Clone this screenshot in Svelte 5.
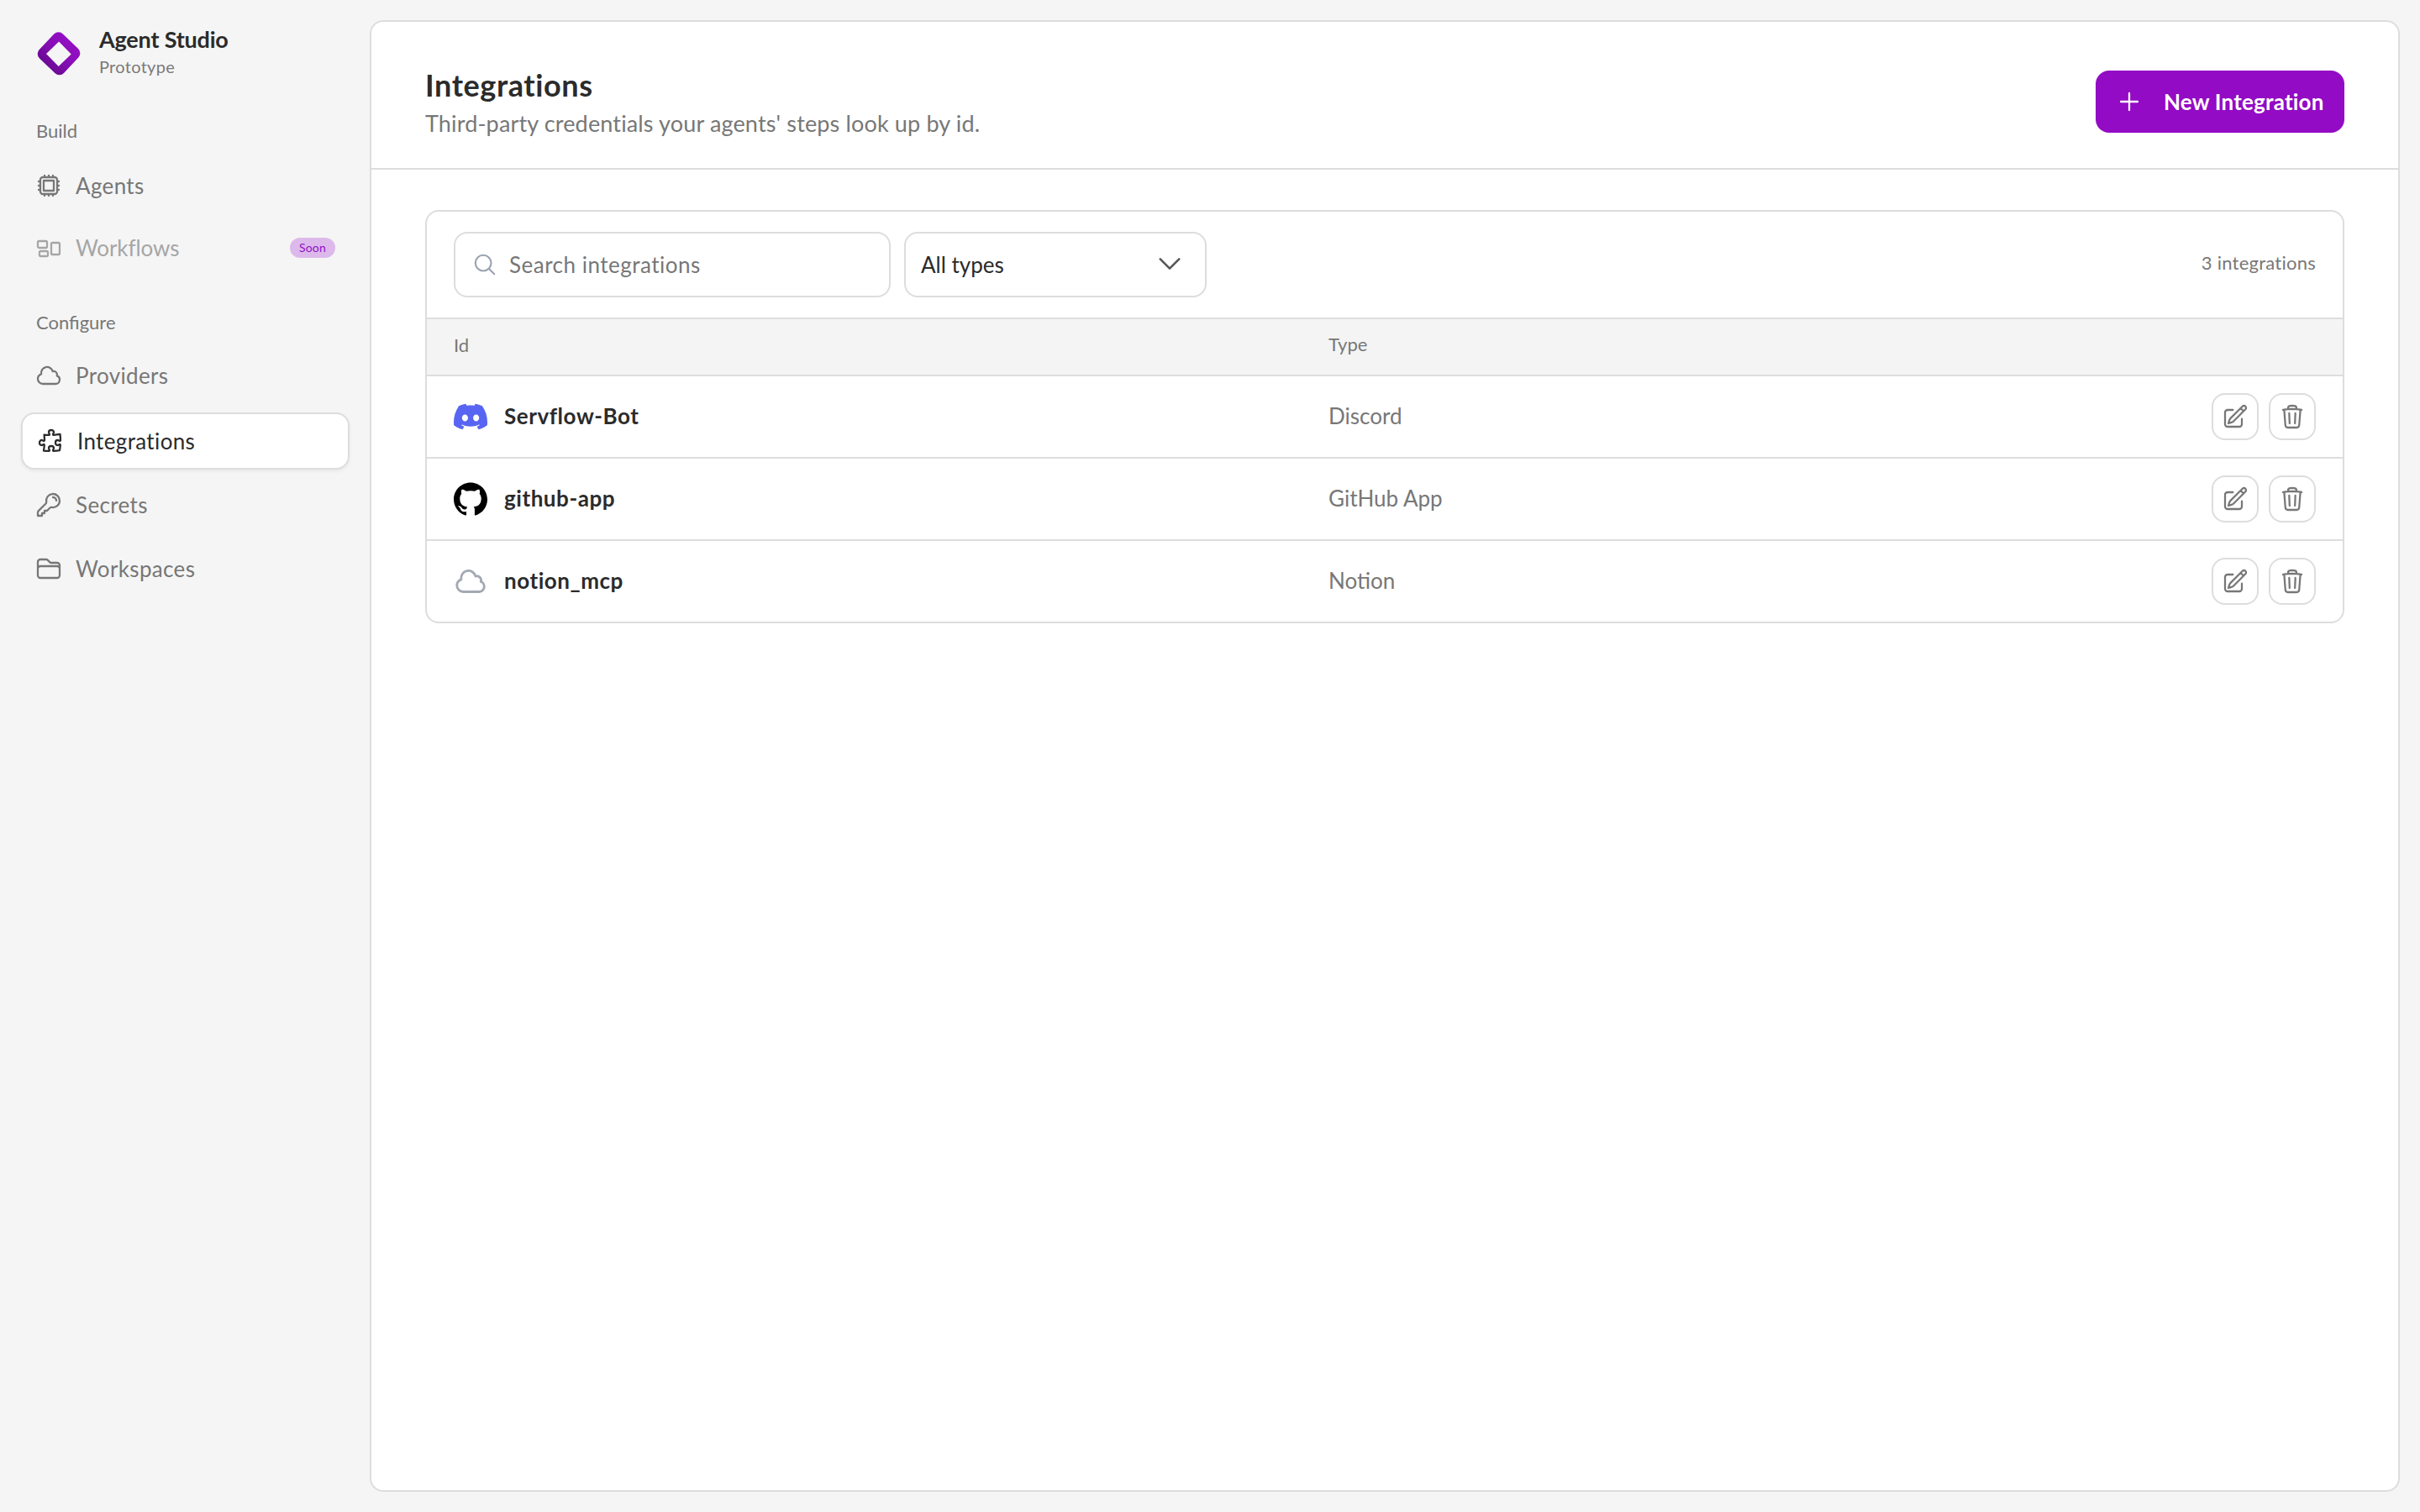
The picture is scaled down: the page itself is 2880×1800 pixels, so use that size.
<script>
	const rows = [
		{ id: "Servflow-Bot", type: "Discord", icon: "discord" },
		{ id: "github-app", type: "GitHub App", icon: "github" },
		{ id: "notion_mcp", type: "Notion", icon: "cloud" }
	];

	const paths = {
		cpu: "M8.25 3v1.5M4.5 8.25H3m18 0h-1.5M4.5 12H3m18 0h-1.5m-15 3.75H3m18 0h-1.5M8.25 19.5V21M12 3v1.5m0 15V21m3.75-18v1.5m0 15V21m-9-1.5h10.5a2.25 2.25 0 0 0 2.25-2.25V6.75a2.25 2.25 0 0 0-2.25-2.25H6.75A2.25 2.25 0 0 0 4.5 6.75v10.5a2.25 2.25 0 0 0 2.25 2.25Zm.75-12h9v9h-9v-9Z",
		group: "M2.25 7.125C2.25 6.504 2.754 6 3.375 6h6c.621 0 1.125.504 1.125 1.125v3.75c0 .621-.504 1.125-1.125 1.125h-6a1.125 1.125 0 0 1-1.125-1.125v-3.75ZM14.25 8.625c0-.621.504-1.125 1.125-1.125h5.25c.621 0 1.125.504 1.125 1.125v8.25c0 .621-.504 1.125-1.125 1.125h-5.25a1.125 1.125 0 0 1-1.125-1.125v-8.25ZM3.75 16.125c0-.621.504-1.125 1.125-1.125h5.25c.621 0 1.125.504 1.125 1.125v2.25c0 .621-.504 1.125-1.125 1.125h-5.25a1.125 1.125 0 0 1-1.125-1.125v-2.25Z",
		cloud: "M2.25 15a4.5 4.5 0 0 0 4.5 4.5H18a3.75 3.75 0 0 0 1.332-7.257 3 3 0 0 0-3.758-3.848 5.25 5.25 0 0 0-10.233 2.33A4.5 4.5 0 0 0 2.25 15Z",
		puzzle: "M14.25 6.087c0-.355.186-.676.401-.959.221-.29.349-.634.349-1.003 0-1.036-1.007-1.875-2.25-1.875s-2.25.84-2.25 1.875c0 .369.128.713.349 1.003.215.283.401.604.401.959v0a.64.64 0 0 1-.657.643 48.39 48.39 0 0 1-4.163-.3c.186 1.613.293 3.25.315 4.907a.656.656 0 0 1-.658.663v0c-.355 0-.676-.186-.959-.401a1.647 1.647 0 0 0-1.003-.349c-1.036 0-1.875 1.007-1.875 2.25s.84 2.25 1.875 2.25c.369 0 .713-.128 1.003-.349.283-.215.604-.401.959-.401v0c.31 0 .555.26.532.57a48.039 48.039 0 0 1-.642 5.056c1.518.19 3.058.309 4.616.354a.64.64 0 0 0 .657-.643v0c0-.355-.186-.676-.401-.959a1.647 1.647 0 0 1-.349-1.003c0-1.035 1.008-1.875 2.25-1.875 1.243 0 2.25.84 2.25 1.875 0 .369-.128.713-.349 1.003-.215.283-.4.604-.4.959v0c0 .333.277.599.61.58a48.1 48.1 0 0 0 5.427-.63 48.05 48.05 0 0 0 .582-4.717.532.532 0 0 0-.533-.57v0c-.355 0-.676.186-.959.401-.29.221-.634.349-1.003.349-1.035 0-1.875-1.007-1.875-2.25s.84-2.25 1.875-2.25c.37 0 .713.128 1.003.349.283.215.604.401.96.401v0a.656.656 0 0 0 .658-.663 48.422 48.422 0 0 0-.37-5.36c-1.886.342-3.81.574-5.766.689a.578.578 0 0 1-.61-.58v0Z",
		key: "M15.75 5.25a3 3 0 0 1 3 3m3 0a6 6 0 0 1-7.029 5.912c-.563-.097-1.159.026-1.563.43L10.5 17.25H8.25v2.25H6v2.25H2.25v-2.818c0-.597.237-1.17.659-1.591l6.499-6.499c.404-.404.527-1 .43-1.563A6 6 0 1 1 21.75 8.25Z",
		folder: "M2.25 12.75V12A2.25 2.25 0 0 1 4.5 9.75h15A2.25 2.25 0 0 1 21.75 12v.75m-8.69-6.44-2.12-2.12a1.5 1.5 0 0 0-1.061-.44H4.5A2.25 2.25 0 0 0 2.25 6v12a2.25 2.25 0 0 0 2.25 2.25h15A2.25 2.25 0 0 0 21.75 18V9a2.25 2.25 0 0 0-2.25-2.25h-5.379a1.5 1.5 0 0 1-1.06-.44Z",
		search: "m21 21-5.197-5.197m0 0A7.5 7.5 0 1 0 5.196 5.196a7.5 7.5 0 0 0 10.607 10.607Z",
		chevron: "m19.5 8.25-7.5 7.5-7.5-7.5",
		plus: "M12 4.5v15m7.5-7.5h-15",
		edit: "m16.862 4.487 1.687-1.688a1.875 1.875 0 1 1 2.652 2.652L10.582 16.07a4.5 4.5 0 0 1-1.897 1.13L6 18l.8-2.685a4.5 4.5 0 0 1 1.13-1.897l8.932-8.931Zm0 0L19.5 7.125M18 14v4.75A2.25 2.25 0 0 1 15.75 21H5.25A2.25 2.25 0 0 1 3 18.75V8.25A2.25 2.25 0 0 1 5.25 6H10",
		trash: "m14.74 9-.346 9m-4.788 0L9.26 9m9.968-3.21c.342.052.682.107 1.022.166m-1.022-.165L18.16 19.673a2.25 2.25 0 0 1-2.244 2.077H8.084a2.25 2.25 0 0 1-2.244-2.077L4.772 5.79m14.456 0a48.108 48.108 0 0 0-3.478-.397m-12 .562c.34-.059.68-.114 1.022-.165m0 0a48.11 48.11 0 0 1 3.478-.397m7.5 0v-.916c0-1.18-.91-2.164-2.09-2.201a51.964 51.964 0 0 0-3.32 0c-1.18.037-2.09 1.022-2.09 2.201v.916m7.5 0a48.667 48.667 0 0 0-7.5 0"
	};

	const discord = "M20.317 4.3698a19.7913 19.7913 0 00-4.8851-1.5152.0741.0741 0 00-.0785.0371c-.211.3753-.4447.8648-.6083 1.2495-1.8447-.2762-3.68-.2762-5.4868 0-.1636-.3933-.4058-.8742-.6177-1.2495a.077.077 0 00-.0785-.037 19.7363 19.7363 0 00-4.8852 1.515.0699.0699 0 00-.0321.0277C.5334 9.0458-.319 13.5799.0992 18.0578a.0824.0824 0 00.0312.0561c2.0528 1.5076 4.0413 2.4228 5.9929 3.0294a.0777.0777 0 00.0842-.0276c.4616-.6304.8731-1.2952 1.226-1.9942a.076.076 0 00-.0416-.1057c-.6528-.2476-1.2743-.5495-1.8722-.8923a.077.077 0 01-.0076-.1277c.1258-.0943.2517-.1923.3718-.2914a.0743.0743 0 01.0776-.0105c3.9278 1.7933 8.18 1.7933 12.0614 0a.0739.0739 0 01.0785.0095c.1202.099.246.1981.3728.2924a.077.077 0 01-.0066.1276 12.2986 12.2986 0 01-1.873.8914.0766.0766 0 00-.0407.1067c.3604.698.7719 1.3628 1.225 1.9932a.076.076 0 00.0842.0286c1.961-.6067 3.9495-1.5219 6.0023-3.0294a.077.077 0 00.0313-.0552c.5004-5.177-.8382-9.6739-3.5485-13.6604a.061.061 0 00-.0312-.0286zM8.02 15.3312c-1.1825 0-2.1569-1.0857-2.1569-2.419 0-1.3332.9555-2.4189 2.157-2.4189 1.2108 0 2.1757 1.0952 2.1568 2.419 0 1.3332-.9555 2.4189-2.1569 2.4189zm7.9748 0c-1.1825 0-2.1569-1.0857-2.1569-2.419 0-1.3332.9554-2.4189 2.1569-2.4189 1.2108 0 2.1757 1.0952 2.1568 2.419 0 1.3332-.946 2.4189-2.1568 2.4189Z";
	const github = "M12 .297c-6.63 0-12 5.373-12 12 0 5.303 3.438 9.8 8.205 11.385.6.113.82-.258.82-.577 0-.285-.01-1.04-.015-2.04-3.338.724-4.042-1.61-4.042-1.61C4.422 18.07 3.633 17.7 3.633 17.7c-1.087-.744.084-.729.084-.729 1.205.084 1.838 1.236 1.838 1.236 1.07 1.835 2.809 1.305 3.495.998.108-.776.417-1.305.76-1.605-2.665-.3-5.466-1.332-5.466-5.93 0-1.31.465-2.38 1.235-3.22-.135-.303-.54-1.523.105-3.176 0 0 1.005-.322 3.3 1.23.96-.267 1.98-.399 3-.405 1.02.006 2.04.138 3 .405 2.28-1.552 3.285-1.23 3.285-1.23.645 1.653.24 2.873.12 3.176.765.84 1.23 1.91 1.23 3.22 0 4.61-2.805 5.625-5.475 5.92.42.36.81 1.096.81 2.22 0 1.606-.015 2.896-.03 3.286 0 .315.21.69.825.57C20.565 22.092 24 17.592 24 12.297c0-6.627-5.373-12-12-12";
</script>

<div class="page">
	<aside class="sidebar">
		<div class="brand">
			<svg class="logo" viewBox="0 0 52 52">
				<defs>
					<linearGradient id="logo-grad" x1="0" y1="1" x2="1" y2="0">
						<stop offset="0" stop-color="#560a7c" />
						<stop offset="0.55" stop-color="#8a0db9" />
						<stop offset="1" stop-color="#9a10cb" />
					</linearGradient>
				</defs>
				<path class="solid" fill="url(#logo-grad)" fill-rule="evenodd" d="M20.5 2.3a7.5 7.5 0 0 1 10.4.2l18.2 17.6a7.5 7.5 0 0 1 .2 10.5L32 49a7.5 7.5 0 0 1-10.4.3L3 31.5a7.5 7.5 0 0 1-.2-10.6ZM11 26.1l14.7 15 15-14.6-14.6-15Z" />
			</svg>
			<div class="brand-text">
				<div class="brand-name">Agent Studio</div>
				<div class="brand-sub">Prototype</div>
			</div>
		</div>

		<div class="section build">Build</div>
		<a class="item agents" href="#agents">
			<svg class="ico" viewBox="0 0 24 24"><path d={paths.cpu} /></svg>
			<span>Agents</span>
		</a>
		<a class="item disabled" href="#workflows">
			<svg class="ico" viewBox="0 0 24 24"><path d={paths.group} /></svg>
			<span>Workflows</span>
			<span class="soon">Soon</span>
		</a>

		<div class="section configure">Configure</div>
		<a class="item" href="#providers">
			<svg class="ico" viewBox="0 0 24 24"><path d={paths.cloud} /></svg>
			<span>Providers</span>
		</a>
		<a class="item active" href="#integrations">
			<svg class="ico" viewBox="0 0 24 24"><path d={paths.puzzle} /></svg>
			<span>Integrations</span>
		</a>
		<a class="item" href="#secrets">
			<svg class="ico" viewBox="0 0 24 24"><path d={paths.key} /></svg>
			<span>Secrets</span>
		</a>
		<a class="item" href="#workspaces">
			<svg class="ico" viewBox="0 0 24 24"><path d={paths.folder} /></svg>
			<span>Workspaces</span>
		</a>
	</aside>

	<main class="panel">
		<header class="head">
			<div>
				<h1>Integrations</h1>
				<p>Third-party credentials your agents' steps look up by id.</p>
			</div>
			<button class="primary">
				<svg class="plus" viewBox="0 0 24 24"><path d={paths.plus} /></svg>
				New Integration
			</button>
		</header>

		<div class="body">
			<section class="card">
				<div class="toolbar">
					<label class="search">
						<svg class="search-ico" viewBox="0 0 24 24"><path d={paths.search} /></svg>
						<input type="text" placeholder="Search integrations" />
					</label>
					<button class="select">
						<span>All types</span>
						<svg class="chev" viewBox="0 0 24 24"><path d={paths.chevron} /></svg>
					</button>
					<span class="count">3 integrations</span>
				</div>

				<div class="row thead">
					<div>Id</div>
					<div class="type-col">Type</div>
				</div>

				{#each rows as row}
					<div class="row">
						<div class="id-cell">
							{#if row.icon === "discord"}
								<svg class="brand-ico" viewBox="0 0 24 24"><path class="solid" fill="#5865f2" d={discord} /></svg>
							{:else if row.icon === "github"}
								<svg class="brand-ico" viewBox="0 0 24 24"><path class="solid" fill="#000" d={github} /></svg>
							{:else}
								<svg class="brand-ico outline" viewBox="0 0 24 24"><path d={paths.cloud} /></svg>
							{/if}
							<strong>{row.id}</strong>
						</div>
						<div class="type-col">{row.type}</div>
						<div class="actions">
							<button class="icon-btn" aria-label="Edit">
								<svg class="ico-sm" viewBox="0 0 24 24"><path d={paths.edit} /></svg>
							</button>
							<button class="icon-btn" aria-label="Delete">
								<svg class="ico-sm" viewBox="0 0 24 24"><path d={paths.trash} /></svg>
							</button>
						</div>
					</div>
				{/each}
			</section>
		</div>
	</main>
</div>

<style>
	:global(body) {
		margin: 0;
		background: #f5f5f5;
		font-family: Lato, "Liberation Sans", sans-serif;
		color: #2b2b2b;
	}

	.page {
		display: flex;
		height: 1800px;
		box-sizing: border-box;
		padding: 24px 24px 24px 0;
	}

	svg path:not(.solid) {
		fill: none;
		stroke: currentColor;
		stroke-width: 1.7;
		stroke-linecap: round;
		stroke-linejoin: round;
	}

	/* sidebar */
	.sidebar {
		width: 440px;
		flex: none;
		box-sizing: border-box;
		padding: 14px 24px 0 25px;
		display: flex;
		flex-direction: column;
	}

	.brand {
		display: flex;
		align-items: center;
		gap: 22px;
		padding-left: 19px;
		height: 52px;
	}

	.logo {
		width: 52px;
		height: 52px;
		flex: none;
	}

	.brand-text {
		margin-top: -6px;
	}

	.brand-name {
		font-size: 27px;
		font-weight: 700;
		line-height: 32px;
		letter-spacing: -0.2px;
	}

	.brand-sub {
		font-size: 20px;
		line-height: 26px;
		letter-spacing: 0.3px;
		color: #7a7a7a;
		margin-top: 3px;
	}

	.section {
		font-size: 22px;
		line-height: 28px;
		color: #777;
		padding-left: 18px;
	}

	.build {
		margin-top: 52px;
		margin-bottom: 19px;
	}

	.configure {
		margin-top: 31px;
		margin-bottom: 17px;
	}

	.item {
		display: flex;
		align-items: center;
		height: 64px;
		margin-bottom: 12px;
		padding-left: 17px;
		gap: 16px;
		font-size: 26px;
		letter-spacing: 0.35px;
		color: #777;
		text-decoration: none;
		box-sizing: border-box;
		border-radius: 16px;
	}

	.agents {
		margin-bottom: 10px;
	}

	.item.disabled {
		color: #a6a6a6;
		letter-spacing: -0.1px;
	}

	.item.active {
		height: 68px;
		margin-bottom: 10px;
		background: #fff;
		border: 2px solid #ddd;
		box-shadow: 0 2px 4px rgba(0, 0, 0, 0.06);
		color: #2b2b2b;
	}

	.ico {
		width: 32px;
		height: 32px;
		flex: none;
	}

	.soon {
		margin-left: auto;
		margin-right: 17px;
		background: #dcb9ea;
		color: #9010c8;
		font-size: 14px;
		line-height: 24px;
		letter-spacing: 0.2px;
		padding: 0 11px;
		border-radius: 12px;
	}

	/* main panel */
	.panel {
		flex: 1;
		min-width: 0;
		background: #fff;
		border: 2px solid #ddd;
		border-radius: 16px;
		box-sizing: border-box;
	}

	.head {
		height: 176px;
		box-sizing: border-box;
		border-bottom: 2px solid #ddd;
		padding: 16px 64px 0;
		display: flex;
		align-items: center;
		justify-content: space-between;
	}

	h1 {
		margin: 0;
		font-size: 36px;
		font-weight: 700;
		line-height: 44px;
		letter-spacing: 0.6px;
	}

	.head p {
		margin: 7px 0 0;
		font-size: 27px;
		letter-spacing: 0.15px;
		line-height: 34px;
		color: #777;
	}

	.primary {
		width: 296px;
		height: 74px;
		background: #930bc4;
		color: #fff;
		border: 0;
		border-radius: 16px;
		font: 700 26px Lato, sans-serif;
		letter-spacing: 0.2px;
		display: flex;
		align-items: center;
		gap: 25px;
		padding: 0 0 0 24px;
	}

	.plus {
		width: 32px;
		height: 32px;
	}

	.body {
		padding: 48px 64px;
	}

	.card {
		border: 2px solid #ddd;
		border-radius: 16px;
		overflow: hidden;
	}

	.toolbar {
		display: flex;
		align-items: center;
		gap: 16px;
		padding: 24px 32px;
		height: 126px;
		box-sizing: border-box;
	}

	.search {
		width: 520px;
		height: 78px;
		box-sizing: border-box;
		border: 2px solid #ddd;
		border-radius: 16px;
		display: flex;
		align-items: center;
		gap: 14px;
		padding-left: 20px;
	}

	.search-ico {
		width: 30px;
		height: 30px;
		color: #9aa3af;
		flex: none;
	}

	.search input {
		border: 0;
		outline: 0;
		flex: 1;
		min-width: 0;
		font: 26px Lato, sans-serif;
		letter-spacing: 0.5px;
		color: #2b2b2b;
		background: transparent;
		padding: 0;
	}

	.search input::placeholder {
		color: #777;
		opacity: 1;
	}

	.select {
		width: 360px;
		height: 78px;
		box-sizing: border-box;
		background: #fff;
		border: 2px solid #ddd;
		border-radius: 16px;
		display: flex;
		align-items: center;
		justify-content: space-between;
		padding: 0 24px 0 18px;
		font: 26px Lato, sans-serif;
		color: #2b2b2b;
	}

	.chev {
		width: 36px;
		height: 36px;
		color: #555;
		margin-top: -2px;
	}

	.count {
		margin-left: auto;
		font-size: 22px;
		letter-spacing: 0.25px;
		color: #777;
		margin-top: -5px;
	}

	.row {
		display: grid;
		grid-template-columns: 1041px 1fr auto;
		align-items: center;
		height: 98px;
		box-sizing: border-box;
		padding: 0 32px;
		border-top: 2px solid #ddd;
		font-size: 26px;
		color: #777;
	}

	.type-col {
		margin-top: -2px;
	}

	.thead {
		height: 68px;
		background: #f4f4f4;
		font-size: 22px;
		padding-bottom: 6px;
	}

	.id-cell {
		display: flex;
		align-items: center;
		gap: 20px;
	}

	.id-cell strong {
		color: #2b2b2b;
		font-weight: 700;
		letter-spacing: 0.55px;
		margin-top: -2px;
	}

	.brand-ico {
		width: 40px;
		height: 40px;
		flex: none;
	}

	.brand-ico.outline {
		color: #a3a9b3;
	}

	.actions {
		display: flex;
		gap: 12px;
	}

	.icon-btn {
		width: 56px;
		height: 56px;
		background: #fff;
		border: 2px solid #ddd;
		border-radius: 16px;
		padding: 0;
		display: flex;
		align-items: center;
		justify-content: center;
		color: #777;
	}

	.ico-sm {
		width: 32px;
		height: 32px;
	}
</style>
